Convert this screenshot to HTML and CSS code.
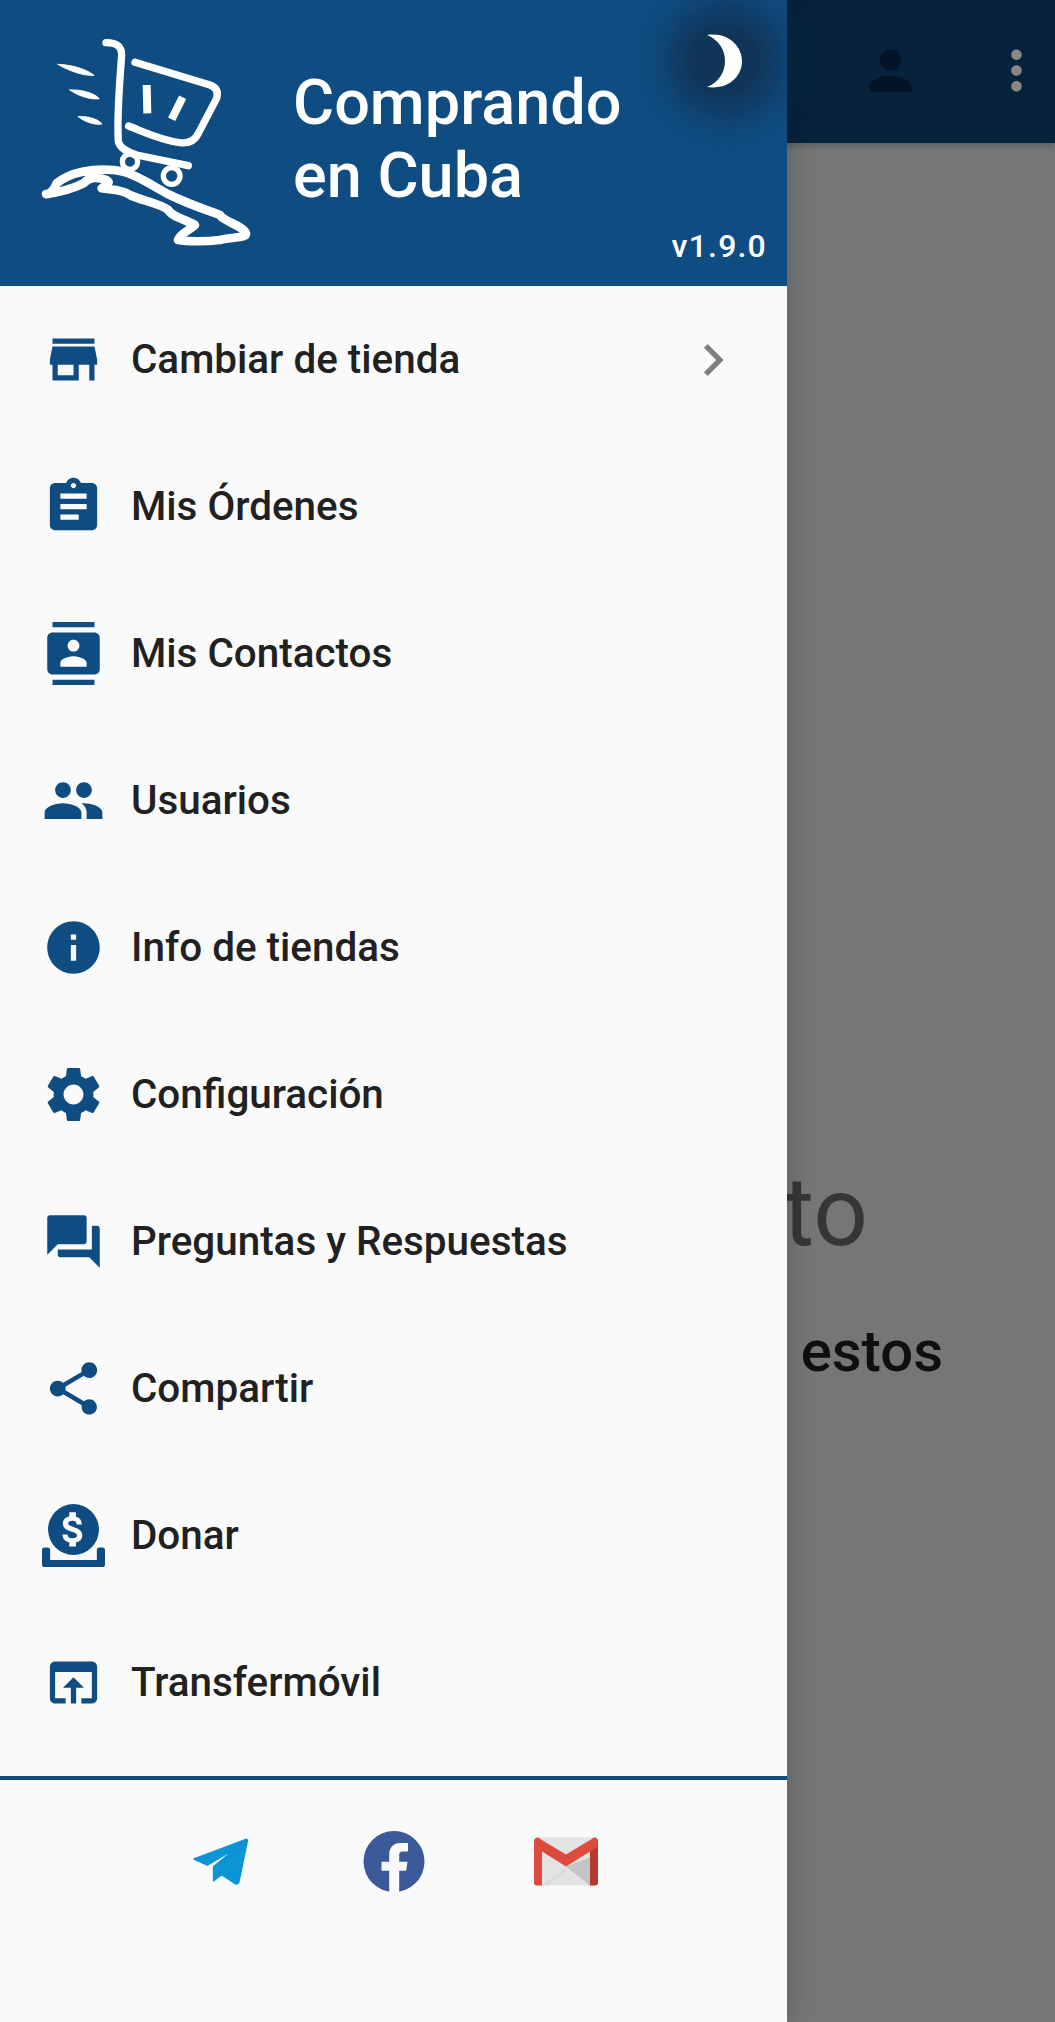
FILE: index.html
```html
<!DOCTYPE html>
<html lang="es">
<head>
    <meta charset="UTF-8">
    <meta name="viewport" content="width=device-width, initial-scale=1.0">
    <title>Comprando en Cuba</title>
    <link rel="stylesheet" href="styles.css">
</head>
<body>
    <!-- pagina de detras del menu -->
    <header class="app-bar">
        <svg class="app-icon person" viewBox="0 0 24 24"><path d="M12 12c2.21 0 4-1.79 4-4s-1.79-4-4-4-4 1.79-4 4 1.79 4 4 4zm0 2c-2.67 0-8 1.34-8 4v2h16v-2c0-2.66-5.33-4-8-4z"/></svg>
        <svg class="app-icon dots" viewBox="0 0 24 24"><path d="M12 8c1.1 0 2-.9 2-2s-.9-2-2-2-2 .9-2 2 .9 2 2 2zm0 2c-1.1 0-2 .9-2 2s.9 2 2 2 2-.9 2-2-.9-2-2-2zm0 6c-1.1 0-2 .9-2 2s.9 2 2 2 2-.9 2-2-.9-2-2-2z"/></svg>
    </header>

    <main class="empty">
        <h2 class="empty-title">to</h2>
        <p class="empty-text">estos</p>
    </main>

    <div class="scrim"></div>

    <!-- menu lateral -->
    <aside class="drawer">
        <div class="drawer-head">
            <svg class="logo" viewBox="0 0 750 720" fill="none" stroke="#fff" stroke-linecap="round" stroke-linejoin="round">
                <path stroke-width="22" d="M258 68C290 68 305 80 305 105C300 180 290 280 295 365C300 385 320 395 350 405L505 437"/>
                <path stroke-width="22" d="M345 127L570 195Q598 205 590 235L535 340Q520 372 480 368C420 360 370 335 326 318"/>
                <path stroke-width="24" stroke-linecap="butt" d="M380 195L382 280M488 232L455 298"/>
                <path fill="#fff" stroke-width="3" d="M114 133C150 134 198 146 222 166C190 168 145 152 114 133ZM150 210C180 208 222 218 238 236C210 240 172 226 150 210ZM175 290C200 288 234 296 246 312C222 316 192 304 175 290Z"/>
                <circle stroke-width="16" cx="330" cy="425" r="23"/>
                <circle stroke-width="16" cx="455" cy="468" r="25"/>
                <path stroke-width="26" d="M78 522C85 525 100 515 110 490C150 455 220 445 280 450C340 455 400 500 450 525C500 550 560 570 600 585L605 592C630 610 670 620 678 640C680 655 640 650 600 660C560 665 500 665 474 660C480 640 510 630 525 615C500 600 455 590 445 570C420 550 360 540 330 525C300 505 270 510 245 505C255 495 275 490 260 480C230 470 210 470 190 490C160 505 130 515 78 522Z"/>
            </svg>
            <div class="brand">Comprando<br>en Cuba</div>
            <span class="version">v1.9.0</span>
            <button class="theme-btn">
                <svg viewBox="0 0 36 54"><path d="M0 1C22-2 35 13 35 27C35 42 22 56 0 53C12 48 18 38 18 27C18 16 12 6 0 1Z"/></svg>
            </button>
        </div>

        <nav class="menu">
            <a class="menu-item">
                <svg class="icon" viewBox="0 0 24 24"><path d="M20 4H4v2h16V4zm1 10v-2l-1-5H4l-1 5v2h1v6h10v-6h4v6h2v-6h1zm-9 4H6v-4h6v4z"/></svg>
                <span>Cambiar de tienda</span>
                <svg class="chevron" viewBox="0 0 24 24"><path d="M10 6L8.59 7.41 13.17 12l-4.58 4.59L10 18l6-6z"/></svg>
            </a>
            <a class="menu-item">
                <svg class="icon" viewBox="0 0 24 24"><path d="M19 3h-4.18C14.4 1.84 13.3 1 12 1c-1.3 0-2.4.84-2.82 2H5c-1.1 0-2 .9-2 2v14c0 1.1.9 2 2 2h14c1.1 0 2-.9 2-2V5c0-1.1-.9-2-2-2zm-7 0c.55 0 1 .45 1 1s-.45 1-1 1-1-.45-1-1 .45-1 1-1zm2 14H7v-2h7v2zm3-4H7v-2h10v2zm0-4H7V7h10v2z"/></svg>
                <span>Mis Órdenes</span>
            </a>
            <a class="menu-item">
                <svg class="icon" viewBox="0 0 24 24"><path d="M20 0H4v2h16V0zM4 24h16v-2H4v2zM20 4H4c-1.1 0-2 .9-2 2v12c0 1.1.9 2 2 2h16c1.1 0 2-.9 2-2V6c0-1.1-.9-2-2-2zm-8 2.75c1.24 0 2.25 1.01 2.25 2.25s-1.01 2.25-2.25 2.25S9.75 10.24 9.75 9 10.76 6.75 12 6.75zM17 17H7v-1.5c0-1.67 3.33-2.5 5-2.5s5 .83 5 2.5V17z"/></svg>
                <span>Mis Contactos</span>
            </a>
            <a class="menu-item">
                <svg class="icon" viewBox="0 0 24 24"><path d="M16 11c1.66 0 2.99-1.34 2.99-3S17.66 5 16 5c-1.66 0-3 1.34-3 3s1.34 3 3 3zm-8 0c1.66 0 2.99-1.34 2.99-3S9.66 5 8 5C6.34 5 5 6.34 5 8s1.34 3 3 3zm0 2c-2.33 0-7 1.17-7 3.5V19h14v-2.5c0-2.33-4.67-3.5-7-3.5zm8 0c-.29 0-.62.02-.97.05 1.16.84 1.97 1.97 1.97 3.45V19h6v-2.5c0-2.33-4.67-3.5-7-3.5z"/></svg>
                <span>Usuarios</span>
            </a>
            <a class="menu-item">
                <svg class="icon" viewBox="0 0 24 24"><path d="M12 2C6.48 2 2 6.48 2 12s4.48 10 10 10 10-4.48 10-10S17.52 2 12 2zm1 15h-2v-6h2v6zm0-8h-2V7h2v2z"/></svg>
                <span>Info de tiendas</span>
            </a>
            <a class="menu-item">
                <svg class="icon" viewBox="0.6 0.6 22.8 22.8"><path d="M19.14 12.94c.04-.3.06-.61.06-.94 0-.32-.02-.64-.07-.94l2.03-1.58c.18-.14.23-.41.12-.61l-1.92-3.32c-.12-.22-.37-.29-.59-.22l-2.39.96c-.5-.38-1.03-.7-1.62-.94l-.36-2.54c-.04-.24-.24-.41-.48-.41h-3.84c-.24 0-.43.17-.47.41l-.36 2.54c-.59.24-1.13.57-1.62.94l-2.39-.96c-.22-.08-.47 0-.59.22L2.74 8.87c-.12.21-.08.47.12.61l2.03 1.58c-.05.3-.09.63-.09.94s.02.64.07.94l-2.03 1.58c-.18.14-.23.41-.12.61l1.92 3.32c.12.22.37.29.59.22l2.39-.96c.5.38 1.03.7 1.62.94l.36 2.54c.05.24.24.41.48.41h3.84c.24 0 .44-.17.47-.41l.36-2.54c.59-.24 1.13-.56 1.62-.94l2.39.96c.22.08.47 0 .59-.22l1.92-3.32c.12-.22.07-.47-.12-.61l-2.01-1.58zM12 15.6c-1.98 0-3.6-1.62-3.6-3.6s1.62-3.6 3.6-3.6 3.6 1.62 3.6 3.6-1.62 3.6-3.6 3.6z"/></svg>
                <span>Configuración</span>
            </a>
            <a class="menu-item">
                <svg class="icon" viewBox="0 0 24 24"><path d="M21 6h-2v9H6v2c0 .55.45 1 1 1h11l4 4V7c0-.55-.45-1-1-1zm-4 6V3c0-.55-.45-1-1-1H3c-.55 0-1 .45-1 1v14l4-4h10c.55 0 1-.45 1-1z"/></svg>
                <span>Preguntas y Respuestas</span>
            </a>
            <a class="menu-item">
                <svg class="icon" viewBox="0 0 24 24"><path d="M18 16.08c-.76 0-1.44.3-1.96.77L8.91 12.7c.05-.23.09-.46.09-.7s-.04-.47-.09-.7l7.05-4.11c.54.5 1.25.81 2.04.81 1.66 0 3-1.34 3-3s-1.34-3-3-3-3 1.34-3 3c0 .24.04.47.09.7L8.04 9.81C7.5 9.31 6.79 9 6 9c-1.66 0-3 1.34-3 3s1.34 3 3 3c.79 0 1.5-.31 2.04-.81l7.12 4.16c-.05.21-.08.43-.08.65 0 1.61 1.31 2.92 2.92 2.92 1.61 0 2.92-1.31 2.92-2.92s-1.31-2.92-2.92-2.92z"/></svg>
                <span>Compartir</span>
            </a>
            <a class="menu-item">
                <svg class="icon" viewBox="0 0 24 24">
                    <path d="M1 16.6h1.1q1 0 1 1v3.7h17.8v-3.7q0-1 1-1H23q1 0 1 1V23q0 1-1 1H1q-1 0-1-1v-5.4q0-1 1-1z"/>
                    <circle cx="12" cy="9.7" r="9.7"/>
                    <path fill="#fafafa" stroke="#fafafa" stroke-width=".6" transform="translate(3.6 1.3) scale(.7)" d="M11.8 10.9c-2.27-.59-3-1.2-3-2.15 0-1.09 1.01-1.85 2.7-1.85 1.78 0 2.44.85 2.5 2.1h2.21c-.07-1.72-1.12-3.3-3.21-3.81V3h-3v2.16c-1.94.42-3.5 1.68-3.5 3.61 0 2.31 1.91 3.46 4.7 4.13 2.5.6 3 1.48 3 2.41 0 .69-.49 1.79-2.7 1.79-2.06 0-2.87-.92-2.98-2.1h-2.2c.12 2.19 1.76 3.42 3.68 3.83V21h3v-2.15c1.95-.37 3.5-1.5 3.5-3.55 0-2.84-2.43-3.81-4.7-4.4z"/>
                </svg>
                <span>Donar</span>
            </a>
            <a class="menu-item">
                <svg class="icon" viewBox="0 0 24 24"><path d="M19 4H5c-1.11 0-2 .9-2 2v12c0 1.1.89 2 2 2h4v-2H5V8h14v10h-4v2h4c1.1 0 2-.9 2-2V6c0-1.1-.89-2-2-2zm-7 6l-4 4h3v6h2v-6h3l-4-4z"/></svg>
                <span>Transfermóvil</span>
            </a>
        </nav>

        <div class="social">
            <svg class="social-icon telegram" viewBox="60 225 180 155"><path fill="#0b94d6" stroke="#0b94d6" stroke-width="5" stroke-linejoin="round" d="M230 236L72 295L112 313L205 258L131 318L131 360L155 342L198 370L206 366L232 240Z"/></svg>
            <svg class="social-icon" viewBox="0 0 61 61">
                <circle cx="30.5" cy="30.5" r="30.5" fill="#3b5998"/>
                <path fill="#fafafa" d="M25.7 61V39.7H18V30.7H25.7V24C25.7 16 30 12 37 12H44.5V20.5H39C36.5 20.5 35.7 22 35.7 24.5V30.7H44L42.7 39.7H35.7V61Z"/>
            </svg>
            <svg class="social-icon" viewBox="0 0 64 48">
                <rect width="64" height="48" rx="3" fill="#e3e3e3"/>
                <path fill="#c4c4c4" d="M32 29L56 48V20Z"/>
                <path fill="#d0d0d0" d="M32 29L8 48H14L32 34Z" opacity=".4"/>
                <path fill="#b93a2c" d="M56 14L61 0Q64 1 64 5V45Q64 48 61 48H56Z"/>
                <path fill="#dd4b3e" d="M3 48Q0 48 0 45V5Q0 0 4 0Q5 0 7 2L32 17L57 2Q59 0 61 0Q64 1 64 5V9L56 14L32 29L8 14V48Z"/>
            </svg>
        </div>
    </aside>
</body>
</html>
```

FILE: styles.css
```css
* {
    box-sizing: border-box;
}

html, body {
    height: 100%;
}

body {
    font-family: 'Roboto', 'Liberation Sans', sans-serif;
    margin: 0;
    padding: 0;
    background-color: #fafafa;
    color: #212121;
    overflow: hidden;
    position: relative;
}

.app-bar {
    height: 143px;
    background-color: #0f4c81;
    display: flex;
    align-items: center;
    justify-content: flex-end;
    padding: 0 0 2px;
    gap: 63px;
    box-shadow: 0 3px 6px rgba(0, 0, 0, 0.2);
}

.app-icon {
    width: 63px;
    height: 63px;
}

.person {
    fill: #052c52;
}

.dots {
    fill: #8a8787;
    margin-right: 7px;
    position: relative;
    z-index: 1;
}

.empty {
    padding: 1013px 112px 0 0;
    text-align: right;
    white-space: nowrap;
}

.empty-title {
    margin: 0 75px 0 0;
    font-size: 96px;
    font-weight: 400;
    line-height: 112px;
    color: rgba(0, 0, 0, 0.54);
}

.empty-text {
    margin: 49px 0 0;
    font-size: 58px;
    line-height: 68px;
    font-weight: 500;
    color: #212121;
}

.scrim {
    position: absolute;
    inset: 0;
    background-color: rgba(0, 0, 0, 0.53);
}

.drawer {
    position: absolute;
    top: 0;
    left: 0;
    bottom: 0;
    width: 787px;
    background-color: #fafafa;
    box-shadow: 0 0 26px rgba(0, 0, 0, 0.22);
    display: flex;
    flex-direction: column;
    z-index: 2;
}

.drawer-head {
    height: 286px;
    flex: none;
    background-color: #0f4c81;
    color: white;
    display: flex;
    padding: 20px 20px 22px 20px;
    position: relative;
}

.logo {
    width: 250px;
    height: 240px;
    flex: none;
}

.brand {
    margin-left: 23px;
    align-self: center;
    font-size: 63px;
    font-weight: 500;
    line-height: 73px;
    padding-bottom: 6px;
}

.version {
    margin-left: auto;
    align-self: flex-end;
    font-size: 32px;
    font-weight: 500;
    line-height: 36px;
    letter-spacing: 1.2px;
}

/* boton de tema con su sombra */
.theme-btn {
    position: absolute;
    top: 0;
    left: 680px;
    width: 90px;
    height: 120px;
    padding: 0;
    border: 0;
    background: none;
    display: flex;
    align-items: center;
    justify-content: center;
}

.theme-btn:before {
    content: '';
    position: absolute;
    left: 10px;
    top: 25px;
    width: 70px;
    height: 70px;
    border-radius: 50%;
    background-color: #113558;
    box-shadow: 0 0 34px 22px #113558;
}

.theme-btn svg {
    width: 36px;
    height: 54px;
    fill: white;
    position: relative;
    left: 0;
    top: 1px;
}

.menu {
    flex: none;
}

.menu-item {
    height: 147px;
    display: flex;
    align-items: center;
    padding: 0 42px 0 41.5px;
    font-size: 40.4px;
    font-weight: 500;
    color: #212121;
}

.icon {
    width: 63px;
    height: 63px;
    flex: none;
    margin-right: 26.5px;
    fill: #0f4c81;
    overflow: visible;
}

.chevron {
    width: 64px;
    height: 64px;
    margin-left: auto;
    fill: #808080;
}

.social {
    margin-top: 20px;
    border-top: 4px solid #0f4c81;
    padding-top: 51px;
    display: flex;
    justify-content: center;
    align-items: center;
    gap: 108px;
}

.social-icon {
    width: 64px;
    height: 61px;
    flex: none;
}

.telegram {
    width: 60px;
    margin: 0 4px 0 0;
}
```
